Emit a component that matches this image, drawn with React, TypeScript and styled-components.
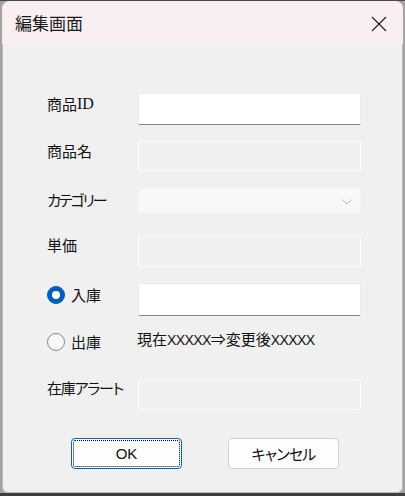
import React from "react";
import styled, { createGlobalStyle } from "styled-components";

const Global = createGlobalStyle`
  html, body { margin: 0; padding: 0; width: 405px; height: 496px; overflow: hidden; }
  body { background: #a3a3a3; font-family: "Noto Sans CJK JP", "Noto Sans", sans-serif; }
  #root { width: 405px; height: 496px; }
`;

const Frame = styled.div`
  box-sizing: border-box;
  width: 405px;
  height: 496px;
  border-top: 1px solid #4a4a4a;
  border-bottom: 3px solid #3f3f3f;
  padding: 0 2px 0 2px;
  display: flex;
`;

const Window = styled.div`
  flex: 1;
  display: flex;
  flex-direction: column;
  background: #f0f0f0;
  border-radius: 8px 8px 6px 6px;
  overflow: hidden;
  box-shadow: inset 0 0 0 1px #b9b9b9;
`;

const TitleBar = styled.div`
  height: 43px;
  flex: none;
  background: #f9eff1;
  display: flex;
  align-items: center;
  justify-content: space-between;
  padding: 0 16px 0 13px;
`;

const Title = styled.span`
  font-size: 17px;
  color: #1a1a1a;
  line-height: 20px;
  margin-top: 1px;
`;

const Close = styled.svg`
  width: 16px;
  height: 16px;
  margin-top: 2px;
`;

const Body = styled.div`
  flex: 1;
  padding: 49px 0 0 45px;
  display: flex;
  flex-direction: column;
`;

const Row = styled.div<{ $top: number }>`
  display: grid;
  grid-template-columns: 91px 223px;
  align-items: start;
  margin-top: ${(p) => p.$top}px;
`;

const Label = styled.div<{ $shift?: number; $spacing?: number }>`
  font-size: 15px;
  line-height: 20px;
  color: #111;
  font-feature-settings: "palt";
  letter-spacing: ${(p) => p.$spacing ?? 0}px;
  margin-top: ${(p) => p.$shift ?? 0}px;
  white-space: nowrap;
  display: flex;
  align-items: center;
`;

const Latin = styled.span`
  font-family: "Liberation Serif", serif;
  font-size: 16px;
`;

const Field = styled.div<{ $h: number; $enabled?: boolean }>`
  box-sizing: border-box;
  height: ${(p) => p.$h}px;
  background: ${(p) => (p.$enabled ? "#ffffff" : "#f0f0f0")};
  border: 1px solid ${(p) => (p.$enabled ? "#ebebeb" : "#fbfbfb")};
  border-bottom: 1px solid ${(p) => (p.$enabled ? "#868686" : "#fbfbfb")};
  border-radius: 2px;
`;

const Combo = styled.div`
  box-sizing: border-box;
  height: 26px;
  background: #f8f8f8;
  border: 1px solid #f2f2f2;
  border-radius: 2px;
  display: flex;
  align-items: center;
  justify-content: flex-end;
  padding-right: 8px;
`;

const Chevron = styled.svg`
  width: 10px;
  height: 6px;
  margin-top: 2px;
`;

const RadioLabel = styled.label`
  display: flex;
  align-items: center;
  gap: 6px;
  font-size: 15px;
  line-height: 20px;
  color: #111;
`;

const RadioDot = styled.span<{ $checked?: boolean }>`
  box-sizing: border-box;
  width: 18px;
  height: 18px;
  border-radius: 50%;
  display: inline-flex;
  align-items: center;
  justify-content: center;
  background: ${(p) => (p.$checked ? "#005fb8" : "#f7f7f7")};
  border: 1px solid ${(p) => (p.$checked ? "#005fb8" : "#8a8a8a")};
  &::after {
    content: "";
    display: ${(p) => (p.$checked ? "block" : "none")};
    width: 8px;
    height: 8px;
    border-radius: 50%;
    background: #fff;
  }
`;

const Info = styled.div`
  font-size: 15px;
  line-height: 20px;
  color: #111;
  font-feature-settings: "palt";
  white-space: nowrap;
  margin-top: -1px;
  margin-left: -1px;
`;

const InfoLatin = styled.span`
  font-family: "Liberation Sans", sans-serif;
  font-size: 14px;
  letter-spacing: -0.6px;
`;

const Buttons = styled.div`
  display: flex;
  gap: 46px;
  padding-left: 24px;
  margin-top: 28px;
`;

const Button = styled.button<{ $primary?: boolean }>`
  box-sizing: border-box;
  width: 111px;
  height: 31px;
  position: relative;
  background: #fdfdfd;
  border: 1px solid ${(p) => (p.$primary ? "#0067c0" : "#d0d0d0")};
  border-radius: 4px;
  font-family: "Noto Sans CJK JP", "Noto Sans", sans-serif;
  font-feature-settings: "palt";
  letter-spacing: -0.8px;
  font-size: 15px;
  color: #111;
  padding: 0;
  display: flex;
  align-items: center;
  justify-content: center;
  &::after {
    content: "";
    display: ${(p) => (p.$primary ? "block" : "none")};
    position: absolute;
    inset: 1px;
    border: 1px dotted #000;
    border-radius: 2px;
  }
`;

const OkText = styled.span`
  font-family: "Liberation Sans", sans-serif;
  font-size: 15px;
  letter-spacing: 0;
`;

export default function App() {
  return (
    <>
      <Global />
      <Frame>
        <Window>
          <TitleBar>
            <Title>編集画面</Title>
            <Close viewBox="0 0 16 16">
              <path d="M1 1 L15 15 M15 1 L1 15" stroke="#1a1a1a" strokeWidth="1.1" fill="none" />
            </Close>
          </TitleBar>
          <Body>
            <Row $top={0}>
              <Label $shift={1}>
                商品<Latin>ID</Latin>
              </Label>
              <Field $h={32} $enabled />
            </Row>
            <Row $top={16}>
              <Label $shift={0}>商品名</Label>
              <Field $h={30} />
            </Row>
            <Row $top={17}>
              <Label $shift={2} $spacing={-2}>カテゴリー</Label>
              <Combo>
                <Chevron viewBox="0 0 10 6">
                  <path d="M0.5 0.5 L5 5 L9.5 0.5" stroke="#b8b8b8" strokeWidth="1" fill="none" />
                </Chevron>
              </Combo>
            </Row>
            <Row $top={22}>
              <Label $shift={-1}>単価</Label>
              <Field $h={31} />
            </Row>
            <Row $top={16}>
              <Label $shift={2}>
                <RadioLabel>
                  <RadioDot $checked />
                  入庫
                </RadioLabel>
              </Label>
              <Field $h={33} $enabled />
            </Row>
            <Row $top={14}>
              <Label $shift={2}>
                <RadioLabel>
                  <RadioDot />
                  出庫
                </RadioLabel>
              </Label>
              <Info>
                現在<InfoLatin>XXXXX</InfoLatin>⇒変更後<InfoLatin>XXXXX</InfoLatin>
              </Info>
            </Row>
            <Row $top={27}>
              <Label $shift={-1} $spacing={-1.2}>在庫アラート</Label>
              <Field $h={31} />
            </Row>
            <Buttons>
              <Button $primary>
                <OkText>OK</OkText>
              </Button>
              <Button>キャンセル</Button>
            </Buttons>
          </Body>
        </Window>
      </Frame>
    </>
  );
}
